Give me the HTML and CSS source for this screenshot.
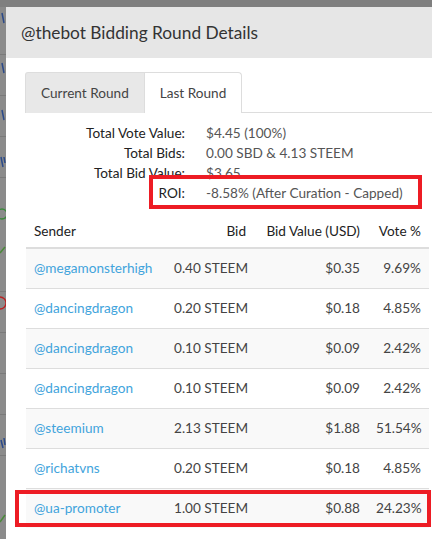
FILE: index.html
```html
<!DOCTYPE html>
<html>
<head>
<meta charset="utf-8">
<link rel="stylesheet" href="styles.css">
</head>
<body>
<div class="screen">
  <div class="behind">
    <svg width="6" height="532" viewBox="0 0 6 532">
      <g stroke="#7a7a7a" stroke-width="1">
        <line x1="0" y1="47.5" x2="6" y2="47.5"/>
        <line x1="0" y1="88.5" x2="6" y2="88.5"/>
        <line x1="0" y1="129.5" x2="6" y2="129.5"/>
        <line x1="0" y1="170.5" x2="6" y2="170.5"/>
        <line x1="0" y1="211.5" x2="6" y2="211.5"/>
        <line x1="0" y1="284.5" x2="6" y2="284.5"/>
        <line x1="0" y1="325.5" x2="6" y2="325.5"/>
        <line x1="0" y1="366.5" x2="6" y2="366.5"/>
        <line x1="0" y1="407.5" x2="6" y2="407.5"/>
        <line x1="0" y1="448.5" x2="6" y2="448.5"/>
      </g>
      <g stroke="#2b4a8a" stroke-width="1.5" fill="none">
        <path d="M2 6 L4 16"/>
        <path d="M2 56 L4 66"/>
        <path d="M2 103 L4 113"/>
        <path d="M1 150 L3 160 M4 150 L5 156"/>
        <path d="M1 433 L3 441 M4 431 L5 438"/>
      </g>
      <circle cx="2" cy="207" r="5" stroke="#3c8a3c" stroke-width="1.3" fill="none"/>
      <path d="M0 246 L5 240" stroke="#4a8a3a" stroke-width="1.5"/>
      <circle cx="0" cy="296" r="6" stroke="#b22" stroke-width="1.3" fill="none"/>
      <path d="M0 515 L5 508" stroke="#4a8a3a" stroke-width="1.5"/>
    </svg>
  </div>
  <div class="modal">
    <div class="modal-header">
      <h4 class="modal-title">@thebot Bidding Round Details</h4>
    </div>
    <div class="modal-body">
      <ul class="tabs">
        <li class="tab">Current Round</li>
        <li class="tab active">Last Round</li>
      </ul>
      <div class="summary">
        <div class="label">Total Vote Value:</div><div class="value">$4.45 (100%)</div>
        <div class="label">Total Bids:</div><div class="value">0.00 SBD &amp; 4.13 STEEM</div>
        <div class="label">Total Bid Value:</div><div class="value">$3.65</div>
        <div class="label">ROI:</div><div class="value">-8.58% (After Curation - Capped)</div>
      </div>
      <table class="bids">
        <thead>
          <tr>
            <th class="c-sender">Sender</th>
            <th class="c-bid num">Bid</th>
            <th class="c-value num">Bid Value (USD)</th>
            <th class="c-vote num">Vote %</th>
          </tr>
        </thead>
        <tbody>
          <tr><td><a>@megamonsterhigh</a></td><td class="num">0.40 STEEM</td><td class="num">$0.35</td><td class="num">9.69%</td></tr>
          <tr><td><a>@dancingdragon</a></td><td class="num">0.20 STEEM</td><td class="num">$0.18</td><td class="num">4.85%</td></tr>
          <tr><td><a>@dancingdragon</a></td><td class="num">0.10 STEEM</td><td class="num">$0.09</td><td class="num">2.42%</td></tr>
          <tr><td><a>@dancingdragon</a></td><td class="num">0.10 STEEM</td><td class="num">$0.09</td><td class="num">2.42%</td></tr>
          <tr><td><a>@steemium</a></td><td class="num">2.13 STEEM</td><td class="num">$1.88</td><td class="num">51.54%</td></tr>
          <tr><td><a>@richatvns</a></td><td class="num">0.20 STEEM</td><td class="num">$0.18</td><td class="num">4.85%</td></tr>
          <tr><td><a>@ua-promoter</a></td><td class="num">1.00 STEEM</td><td class="num">$0.88</td><td class="num">24.23%</td></tr>
        </tbody>
      </table>
    </div>
    <div class="mark mark-roi"></div>
    <div class="mark mark-row"></div>
  </div>
</div>
</body>
</html>
```

FILE: styles.css
```css
* { box-sizing: border-box; }
html, body { margin: 0; padding: 0; overflow: hidden; }
body {
  font-family: Lato, "Open Sans", sans-serif;
  font-size: 13.6px;
  color: #333;
  background: #7f7f7f;
}
.screen {
  display: flex;
  align-items: flex-start;
  width: 432px;
  height: 539px;
  padding-top: 7px;
  background: #7f7f7f;
  overflow: hidden;
}
.behind {
  flex: none;
  width: 6px;
  height: 532px;
  background: #8b8b8b;
}
.behind svg { display: block; }
.modal {
  position: relative;
  flex: none;
  width: 460px;
  height: 560px;
  background: #fff;
}
.modal-header {
  background: #e6e6e6;
  padding: 15px 15px;
  height: 51px;
}
.modal-title {
  margin: 0;
  font-size: 17.3px;
  font-weight: normal;
  line-height: 22px;
  color: #333;
}
.modal-body {
  padding: 14px 0 0 19px;
}
.tabs {
  list-style: none;
  margin: 0;
  padding: 0;
  display: flex;
  border-bottom: 1px solid #ddd;
  width: 420px;
}
.tab {
  padding: 10px 15px 10px 15px;
  line-height: 20px;
  border: 1px solid #ddd;
  border-bottom: none;
  background: #e8e8e8;
  color: #444;
  margin-bottom: -1px;
  border-radius: 3px 0 0 0;
}
.tab.active {
  background: #fff;
  border-left: none;
  border-radius: 0 4px 0 0;
  color: #444;
  height: 41px;
}
.summary {
  display: grid;
  grid-template-columns: 160px auto;
  column-gap: 21px;
  margin-top: 10px;
  line-height: 20px;
}
.summary .label {
  text-align: right;
  color: #222;
}
.summary .value {
  color: #555;
}
.bids {
  margin-top: 8px;
  margin-left: 1px;
  width: 403px;
  border-collapse: collapse;
  table-layout: fixed;
}
.bids th, .bids td {
  padding: 8px;
  text-align: left;
  white-space: nowrap;
}
.bids th {
  font-weight: normal;
  color: #222;
  line-height: 20px;
  padding-top: 10px;
  padding-bottom: 6px;
  border-bottom: 2px solid #ddd;
}
.bids td {
  line-height: 23px;
  border-top: 1px solid #ddd;
  color: #444;
}
.bids tbody tr:nth-child(odd) { background: #f9f9f9; }
.bids .num { text-align: right; }
.bids a { color: #42a4dc; }
.c-sender { width: 140px; }
.c-bid { width: 88px; }
.c-value { width: 114px; }
.c-vote { width: 61px; }
.mark {
  position: absolute;
  border: 4px solid #ed1c24;
}
.mark-roi { left: 143px; top: 168px; width: 273px; height: 34px; }
.mark-row { left: 9px; top: 483px; width: 416px; height: 37px; }
```
